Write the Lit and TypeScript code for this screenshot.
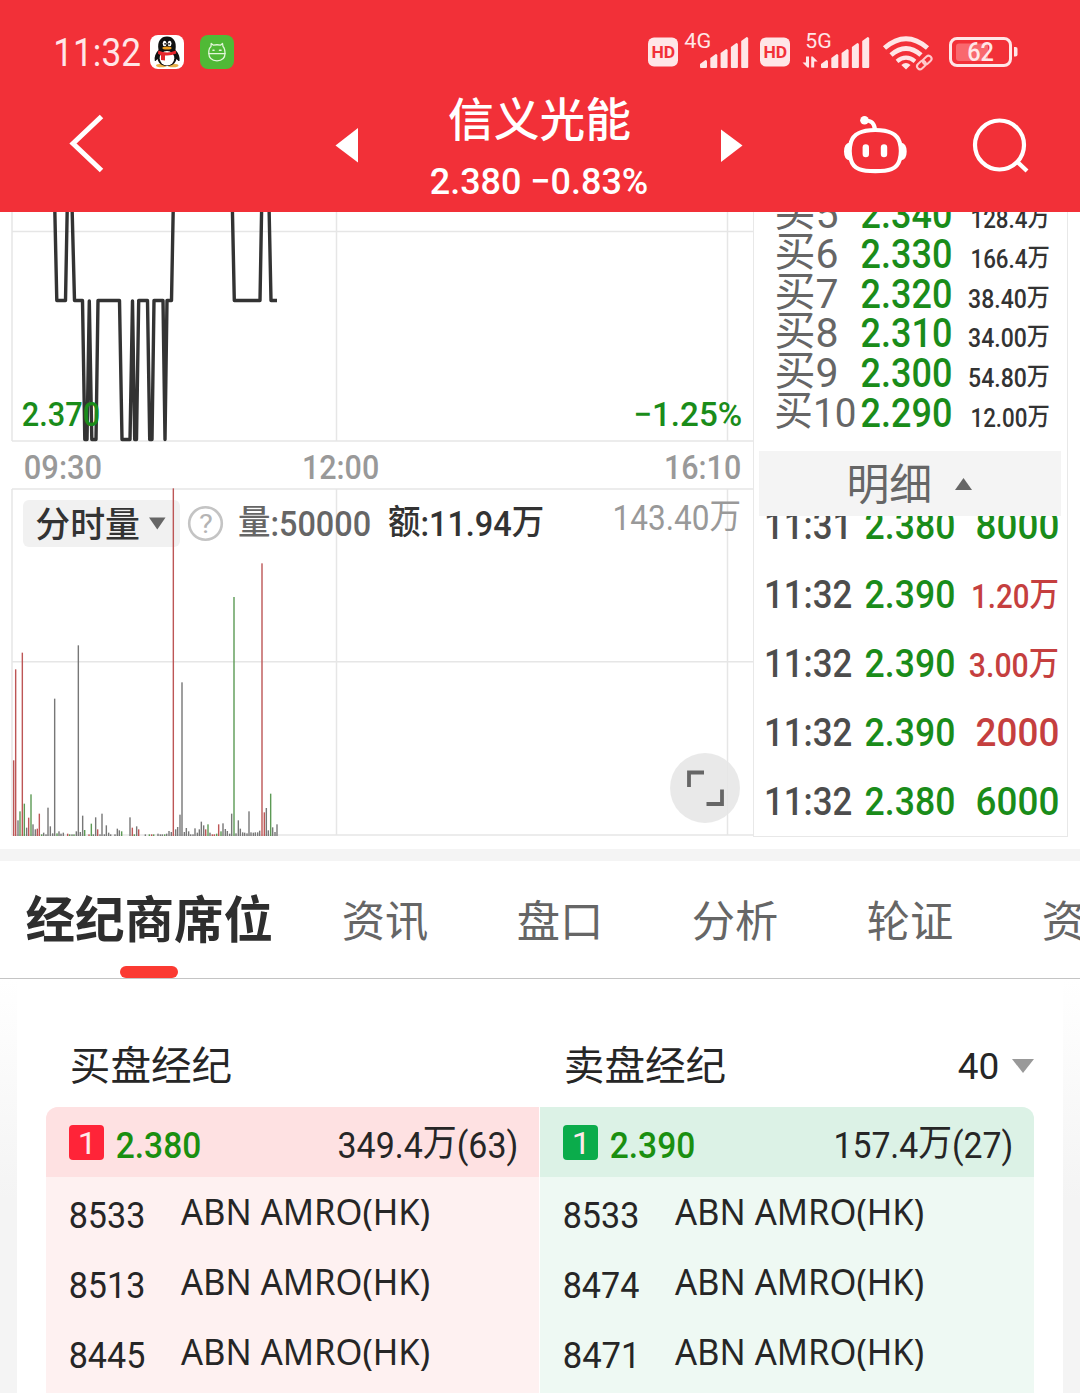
import { LitElement, html, svg, css } from "lit";
import { customElement } from "lit/decorators.js";

type Opt = { cls?: string; lb?: number; rb?: number };

/** Han characters set beside digits sit slightly above the digits' baseline. */
const runs = (text: string, size: number) => {
  const parts = text.split(/([\u4e00-\u9fff]+)/).filter((p) => p);
  if (parts.length < 2) return text;
  const lift = Math.round(size * 6) / 100;
  return parts.map((p, i) => {
    const han = /[\u4e00-\u9fff]/.test(p);
    const dy = han ? -lift : i ? lift : 0;
    return svg`<tspan dy=${dy}>${p}</tspan>`;
  });
};

/** SVG text whose ink spans x..x+w, with its baseline at y. */
const inkText = (text: string, x: number, y: number, w: number, size: number, o: Opt = {}) => {
  const lb = (o.lb ?? 0.035) * size;
  const rb = (o.rb ?? 0.035) * size;
  return svg`<text class=${o.cls ?? ""} x=${x - lb} y=${y} font-size=${size}
    textLength=${w + lb + rb} lengthAdjust="spacingAndGlyphs">${runs(text, size)}</text>`;
};

/** Inline label: its box is the ink width by the cap height, so it can be set in a flex row. */
const label = (text: string, w: number, size: number, o: Opt = {}) => {
  const h = Math.round(size * 0.715);
  return html`<svg class="label" width=${w} height=${h}>${inkText(text, 0, h, w, size, o)}</svg>`;
};

const BOOK = [
  ["买5", "2.340", "128.4万"],
  ["买6", "2.330", "166.4万"],
  ["买7", "2.320", "38.40万"],
  ["买8", "2.310", "34.00万"],
  ["买9", "2.300", "54.80万"],
  ["买10", "2.290", "12.00万"],
];

const TRADES = [
  ["11:31", "2.380", "8000", "down"],
  ["11:32", "2.390", "1.20万", "up"],
  ["11:32", "2.390", "3.00万", "up"],
  ["11:32", "2.390", "2000", "up"],
  ["11:32", "2.380", "6000", "down"],
];

const TABS = ["资讯", "盘口", "分析", "轮证", "资金"];

const BROKERS = [
  { side: "buy", price: "2.380", volume: "349.4万(63)", rows: ["8533", "8513", "8445"] },
  { side: "sell", price: "2.390", volume: "157.4万(27)", rows: ["8533", "8474", "8471"] },
];

/* minute volume: x and height in thirds of a pixel, then colour (r, g, or grey) */
const VOLUME =
  "41:227r 47:500r 54:47 60:74g 67:550r 73:97g 80:25 86:55r 93:125g 99:35 106:20 112:22r 118:67r 125:5g 131:10 138:5 144:85 151:29 158:8 164:412 171:8g 177:14 183:7 190:10 203:7r 209:5g 216:5 222:5g 229:14 235:572 241:12 248:61 254:18g 267:5r 274:37g 280:5 287:56 293:20r 300:5 306:67 313:5 319:32 326:10 332:5 345:5 352:22 358:17 365:14g 390:56 397:25r 403:5g 410:29 416:20r 436:5 448:5g 455:5r 461:5g 474:7 481:5 487:5 494:5g 500:7 507:15 514:12 520:1043r 527:20 533:27 540:64 546:461 553:12 559:24 566:14 572:5 579:5 585:23 592:10 598:20 604:43 611:32 617:20r 624:35g 630:10 637:5r 643:5r 650:7g 656:35r 663:14g 669:38 676:21 682:15 689:7 695:67 702:717g 708:8 715:47 721:22 728:11 734:10 741:8 747:74 753:11 760:10 766:11 773:11 779:16 786:818r 793:71r 799:84 805:17 812:127g 818:26 825:12 831:35"
    .split(" ")
    .map((s) => {
      const [, x, h, c] = /^(\d+):(\d+)([rg]?)$/.exec(s)!;
      return { x: +x / 3, h: +h / 3, cls: c === "r" ? "vr" : c === "g" ? "vg" : "vk" };
    });

const textCss = css`
  svg { display: block; flex: none; overflow: visible; }
  text {
    font-family: Roboto, "Noto Sans CJK SC", sans-serif;
    font-weight: 500;
    fill: currentColor;
    white-space: pre;
  }
  text.ui { font-family: "Noto Sans", "Noto Sans CJK SC", sans-serif; font-weight: 400; }
  text.reg { font-weight: 400; }
  text.bold { font-weight: 700; }
`;

@customElement("status-bar")
class StatusBar extends LitElement {
  static styles = [
    textCss,
    css`
      :host { display: flex; height: 44px; padding: 30px 62px 0 56px; color: #ffe6e7; }
      .time { padding-top: 8px; margin-right: 11px; }
      .app + .app { margin-left: 16px; }
      .right { display: flex; margin-left: auto; }
      .g6 { margin-left: 6px; }
      .g12 { margin-left: 12px; }
      .g14 { margin-left: 14px; }
      .g16 { margin-left: 16px; }
      .hd { fill: #f23038; }
    `,
  ];
  private hd() {
    return html`<svg width="30" height="44" viewBox="0 30 30 44">
      <rect x="0" y="37.500" width="30" height="29" rx="6" fill="#ffe6e7" />
      ${inkText("HD", 4.5, 58, 22, 17, { cls: "bold hd", lb: 0.06, rb: 0.04 })}
    </svg>`;
  }
  private bars(x: number) {
    return [0, 1, 2, 3, 4].map((i) => {
      const h = [8, 14, 19, 25, 31][i];
      return svg`<path d="M${x + i * 10.3} ${68 - h + 4} l5.500 -4 q1.500 0 1.500 1.500 V67 q0 1 -1 1 h-5 q-1 0 -1 -1z" fill="#ffe6e7" />`;
    });
  }
  render() {
    return html`
      <div class="time">${label("11:32", 83, 39, { cls: "reg", lb: 0.07, rb: 0.05 })}</div>
      <svg class="app" width="34" height="44" viewBox="150 30 34 44">
        <rect x="150" y="35" width="34" height="34" rx="8" fill="#fff" />
        <ellipse cx="161.500" cy="65.500" rx="5.500" ry="1.800" fill="#e9b04a" />
        <ellipse cx="173" cy="65.500" rx="5.500" ry="1.800" fill="#e9b04a" />
        <path d="M158.500 50C157 41 161 36.500 167 36.500S177 41 175.500 50C179 54 180 57 179.500 61C178.500 61.500 177.500 60 176.500 59C175.500 63.500 172 66 167 66S158.500 63.500 157.500 59C156.500 60 155.500 61.500 154.800 61C154 57 155.500 53 158.500 50Z" fill="#111" />
        <ellipse cx="167" cy="58.300" rx="7.300" ry="7.200" fill="#fff" />
        <ellipse cx="164.600" cy="43.500" rx="1.900" ry="2.700" fill="#fff" />
        <ellipse cx="169.600" cy="43.500" rx="1.900" ry="2.700" fill="#fff" />
        <circle cx="165.100" cy="43.800" r=".9" fill="#111" />
        <circle cx="169.100" cy="43.800" r=".9" fill="#111" />
        <ellipse cx="167" cy="48" rx="4.600" ry="1.500" fill="#f0a020" />
        <path d="M158.300 50.500Q167 54.500 175.800 50.500L176.300 53.500Q171 56 165 55.500V60.500L161 60V55Q159 54.500 158 53.800Z" fill="#e5252b" />
      </svg>
      <svg class="app" width="34" height="44" viewBox="200 30 34 44">
        <rect x="200" y="35" width="34" height="34" rx="8" fill="#50b936" />
        <g fill="none" stroke="#e2f6da" stroke-width="1.300" stroke-linecap="round" stroke-linejoin="round">
          <path d="M208.800 53.500V51Q209 48 211 46.500L211.200 43.500L213.500 45.200Q217 44.300 220.500 45.200L222.500 43.500L223 46.500Q225 48.500 225 53.500Q225 60.500 217 60.800Q209 60.500 208.800 53.500Z" />
          <path d="M209 53.600H225" />
          <path d="M213 50.300h1M219.500 50.300h1.500" stroke-width="1.600" />
        </g>
      </svg>
      <div class="right">
        ${this.hd()}
        <svg class="g6" width="64" height="44" viewBox="685 30 64 44">
          ${inkText("4G", 686, 48, 25.5, 20.5, { cls: "reg" })} ${this.bars(701)}
        </svg>
        <div class="g12">${this.hd()}</div>
        <svg class="g12" width="67" height="44" viewBox="803 30 67 44">
          ${inkText("5G", 807, 48, 25, 20.5, { cls: "reg" })}
          <path d="M807 56.500H810V67.500H808.500L803.500 62.500H807ZM812.200 67.500V56.500H813.700L818.700 61.500H815.200V67.500Z" fill="#ffe6e7" />
          ${this.bars(822)}
        </svg>
        <svg class="g14" width="50" height="44" viewBox="884 30 50 44">
          <g fill="none" stroke="#ffe6e7" stroke-width="4.800">
            <path d="M885.500 48Q907 29.500 928.500 48" />
            <path d="M892 55Q907 42 922 55" />
            <path d="M898 61.300Q907 54 916 61.300" stroke-width="4.200" />
          </g>
          <path d="M902.300 65Q907 60.800 911.500 65L907 69.500Z" fill="#ffe6e7" />
          <rect x="-4.800" y="-3" width="9.600" height="6" rx="3" transform="translate(927.500 59.500) rotate(-42)" fill="none" stroke="#f23038" stroke-width="5.500" />
          <g fill="none" stroke="#ffc9cc" stroke-width="2">
            <rect x="-4.800" y="-3" width="9.600" height="6" rx="3" transform="translate(928.200 60) rotate(-42)" />
            <rect x="-4.800" y="-3" width="9.600" height="6" rx="3" transform="translate(922.400 65) rotate(-42)" />
          </g>
        </svg>
        <svg class="g16" width="69" height="44" viewBox="949 30 69 44">
          <rect x="950.500" y="38.500" width="60" height="27" rx="6.500" fill="none" stroke="#ffe6e7" stroke-width="3" />
          <rect x="956" y="43.500" width="32" height="17.500" rx="3" fill="#f9686e" />
          <path d="M1014 47h1.500q2 0 2 2v5.500q0 2-2 2H1014z" fill="#ffe6e7" />
          ${inkText("62", 968, 61, 25, 25)}
        </svg>
      </div>
    `;
  }
}

@customElement("title-bar")
class TitleBar extends LitElement {
  static styles = [
    textCss,
    css`
      :host { display: flex; height: 138px; color: #fff; }
      .back { margin-left: 68px; }
      .prev { margin-left: 232px; }
      .name { width: 362px; display: flex; flex-direction: column; align-items: center; box-sizing: border-box; padding-top: 29px; gap: 32px; }
      .bot { margin-left: 99px; }
      .find { margin-left: 64px; }
      .stroke { fill: none; stroke: #fff; stroke-width: 4.200; }
      .chev { stroke-width: 5; }
    `,
  ];
  render() {
    return html`
      <svg class="back" width="36" height="138" viewBox="68 74 36 138">
        <path class="stroke chev" d="M101.500 116.500L73 143.500L101.500 170.500" />
      </svg>
      <svg class="prev" width="22" height="138" viewBox="336 74 22 138"><path d="M358 128V162.500L335.500 145.500Z" fill="#fff" /></svg>
      <div class="name">
        ${label("信义光能", 181, 46, { lb: 0.02, rb: 0.02 })} ${label("2.380 −0.83%", 216, 37)}
      </div>
      <svg width="23" height="138" viewBox="720 74 23 138"><path d="M721 129.500V162L742.500 145.500Z" fill="#fff" /></svg>
      <svg class="bot" width="66" height="138" viewBox="842 74 66 138">
        <path class="stroke" d="M875.300 130C862 130 853.500 133.500 851 142C849.300 148 849.300 154.500 851 160C853.500 169.500 862 171.200 875.300 171.200S897 169.500 899.600 160C901.300 154.500 901.300 148 899.600 142C897 133.500 888.500 130 875.300 130Z" />
        <path d="M849.500 142.500Q844 143.500 844 151.500T849.500 160.500ZM901 142.500Q906.700 143.500 906.700 151.500T901 160.500Z" fill="#fff" />
        <path class="stroke" d="M865 120.500C871 120.500 874.500 122.500 875 130" />
        <circle cx="864.500" cy="120.300" r="4.300" fill="#fff" />
        <rect x="862.600" y="144.300" width="6.400" height="13" rx="3.200" fill="#fff" />
        <rect x="880.800" y="144.300" width="6.400" height="13" rx="3.200" fill="#fff" />
      </svg>
      <svg class="find" width="58" height="138" viewBox="972 74 58 138">
        <circle class="stroke" cx="999.500" cy="145" r="24.500" />
        <path class="stroke" d="M1017 161.500L1027 171" />
      </svg>
    `;
  }
}

@customElement("minute-chart")
class MinuteChart extends LitElement {
  static styles = [
    textCss,
    css`
      :host { display: block; width: 753px; height: 637px; overflow: hidden; }
      svg { overflow: hidden; }
      .grid { stroke: #e6e6e6; stroke-width: 1.500; fill: none; }
      .line { stroke: #333; stroke-width: 3.400; fill: none; stroke-linejoin: round; }
      .green { fill: #1a8c1a; }
      .grey { fill: #999; }
      .pale { fill: #b4b4b4; }
      .mid { fill: #666; }
      .dark { fill: #333; }
      .vr { fill: #bd5656; }
      .vg { fill: #5c9a55; }
      .vk { fill: #777; }
    `,
  ];
  render() {
    return html`<svg width="753" height="637" viewBox="0 212 753 637">
      <path class="grid" d="M12 212V441M12 489V835.500M336.500 212V441M336.500 489V835.500M727.500 212V441M727.500 489V835.500M12 231.500H753M12 441H753M12 489H753M12 661.800H753M12 835H753" />
      <path class="line" d="M54.700 205L56.800 300.500H65.500L67.300 205M72 205L74.500 300.500H82.500L84.800 439.500H87L89.300 301L91.800 439.500H96L98 300.500H119.500L122 439.500H130L132.500 301L134.700 439.500H136.500L138.700 300.500H147.500L149.700 439.500H152L154 300.500H163L165 439.500L167 300.500H171.500L173.300 205M232.300 205L234.300 300.500H260L261.700 205M269 205L271 300.500H277" />
      ${inkText("2.370", 23, 425.5, 76, 34, { cls: "green" })}
      ${inkText("−1.25%", 635, 425.5, 106, 34, { cls: "green", lb: 0.05 })}
      ${inkText("09:30", 25, 478.7, 76, 34, { cls: "grey" })}
      ${inkText("12:00", 304, 478.7, 74, 34, { cls: "grey", lb: 0.06 })}
      ${inkText("16:10", 666, 478.7, 74, 34, { cls: "grey", lb: 0.06 })}
      <rect x="23" y="500" width="157" height="47" rx="6" fill="#f1f1f1" />
      ${VOLUME.map((v) => svg`<rect class=${v.cls} x=${v.x - 0.7} y=${836 - v.h} width="1.400" height=${v.h} />`)}
      ${inkText("分时量", 36, 536.5, 103, 35, { cls: "dark", lb: 0.02, rb: 0.03 })}
      <path d="M149 517.500H165.500L157.300 529.500Z" fill="#666" />
      <circle cx="205.500" cy="523.500" r="16.300" fill="none" stroke="#c4c4c4" stroke-width="2.600" />
      ${inkText("?", 200, 532.5, 12, 26, { cls: "reg pale" })}
      ${inkText("量:50000", 239, 536, 131, 34.5, { cls: "mid", lb: 0.03 })}
      ${inkText("额:11.94万", 389, 536, 154, 34.5, { cls: "dark", lb: 0.03 })}
      ${inkText("143.40万", 615, 530, 125, 34.5, { cls: "grey reg", lb: 0.07, rb: 0.03 })}
      <circle cx="705" cy="788" r="35" fill="#e6e6e6" fill-opacity=".88" />
      <path d="M689 787V772.500H704M722 789.500V804H706.500" fill="none" stroke="#666" stroke-width="3.800" />
    </svg>`;
  }
}

@customElement("quote-panel")
class QuotePanel extends LitElement {
  static styles = [
    textCss,
    css`
      :host {
        display: flex; flex-direction: column; box-sizing: border-box; width: 315px; height: 625px;
        border: 1px solid #e8e8e8; border-top: 0; background: #fff; color: #333;
      }
      .book, .trades { display: flex; flex-direction: column; justify-content: flex-end; overflow: hidden; box-sizing: border-box; }
      .book { height: 239px; padding-bottom: 24px; }
      .trades { height: 320px; padding-bottom: 21px; }
      .row { display: flex; flex: none; align-items: flex-end; }
      .book .row { height: 39.800px; padding: 0 18px 0 22px; }
      .trades .row { height: 69px; padding: 0 9px 0 12px; }
      .lvl { width: 86px; color: #666; }
      .tm { width: 100px; color: #4d4d4d; }
      .down { color: #1a8c1a; }
      .up { color: #c53f3f; }
      .end { margin-left: auto; }
      .more { display: flex; flex: none; align-items: center; justify-content: center; gap: 24px; height: 65px; margin: 0 6px 0 5px; background: #f4f4f4; color: #666; }
      .more .name { padding-top: 2px; }
    `,
  ];
  render() {
    return html`
      <div class="book">
        ${BOOK.map(
          ([l, p, v]) => html`<div class="row">
            <div class="lvl">${label(l, l.length > 2 ? 79 : 61, 41, { cls: "reg", lb: 0.04 })}</div>
            <div class="down">${label(p, 89, 41)}</div>
            <div class="end">${label(v, v[0] === "1" ? 77 : 80, 25.5, { lb: v[0] === "1" ? 0.06 : 0.035, rb: 0.03 })}</div>
          </div>`
        )}
      </div>
      <div class="more">
        <div class="name">${label("明细", 82, 43, { cls: "reg", lb: 0.06, rb: 0.03 })}</div>
        <svg width="17" height="12" viewBox="0 0 17 12"><path d="M0 12H17L8.500 0Z" fill="#666" /></svg>
      </div>
      <div class="trades">
        ${TRADES.map(
          ([t, p, v, d]) => html`<div class="row">
            <div class="tm">${label(t, 85, 39.5, { lb: 0.05 })}</div>
            <div class="down">${label(p, 88, 39.5)}</div>
            <div class="end ${d}">
              ${v.endsWith("万")
                ? label(v, v[0] === "1" ? 85 : 88, 32.5, { lb: v[0] === "1" ? 0.06 : 0.035, rb: 0.03 })
                : label(v, 81, 39.5)}
            </div>
          </div>`
        )}
      </div>
    `;
  }
}

@customElement("section-tabs")
class SectionTabs extends LitElement {
  static styles = [
    textCss,
    css`
      :host { display: flex; box-sizing: border-box; height: 130px; border-top: 12px solid #f4f4f4; border-bottom: 1px solid #c4c4c4; background: #fff; overflow: hidden; color: #666; }
      .on { display: flex; flex-direction: column; align-items: center; justify-content: space-between; width: 246px; flex: none; margin: 0 71px 0 26px; padding-top: 41px; box-sizing: border-box; color: #2e2e2e; }
      .bar { width: 58px; height: 12px; border-radius: 6px; background: #fb3a32; }
      .tab { width: 175px; flex: none; padding-top: 45px; }
    `,
  ];
  render() {
    return html`
      <div class="on">${label("经纪商席位", 246, 50, { cls: "bold", lb: 0.01, rb: 0.02 })}<div class="bar"></div></div>
      ${TABS.map((t) => html`<div class="tab">${label(t, 84, 43.5, { cls: "reg", lb: 0.03, rb: 0.03 })}</div>`)}
    `;
  }
}

@customElement("broker-queue")
class BrokerQueue extends LitElement {
  static styles = [
    textCss,
    css`
      :host { display: block; height: 414px; padding: 0 17px; overflow: hidden; box-sizing: border-box; background: linear-gradient(#fff, #f4f4f4 220px); color: #262626; }
      .card { height: 100%; box-sizing: border-box; padding: 0 29px; background: #fff; }
      .head { display: flex; align-items: flex-end; height: 101px; padding: 0 0 0 25px; margin-bottom: 27px; }
      .head .col { width: 494px; }
      .count { display: flex; align-items: center; gap: 14px; margin-left: auto; padding-bottom: 1px; }
      .head .sell { width: 160px; }
      .table { display: grid; grid-template-columns: 493px 494px; gap: 1px; border-radius: 12px 12px 0 0; overflow: hidden; height: 286px; }
      .side.buy { background: #fef1f1; }
      .side.sell { background: #eef9f3; }
      .top { display: flex; align-items: center; height: 70px; padding: 0 22px 0 23px; }
      .buy .top { background: #fee1e2; }
      .sell .top { background: #dcf2e6; }
      .badge { display: flex; align-items: center; justify-content: center; width: 35px; height: 35px; border-radius: 4px; color: #ffe9ea; margin-right: 13px; }
      .buy .badge { background: #ff2438; }
      .sell .badge { background: #0bac4b; }
      .price { color: #1a8f10; padding-top: 5px; }
      .vol { margin-left: auto; padding-top: 5px; }
      .row { display: flex; height: 70px; padding-left: 24px; }
      .id { width: 111px; padding-top: 24px; }
      .who { padding-top: 22px; }
    `,
  ];
  render() {
    return html`<div class="card">
      <div class="head">
        <div class="col">${label("买盘经纪", 160, 40, { cls: "reg", lb: 0.03, rb: 0.03 })}</div>
        <div class="sell">${label("卖盘经纪", 160, 40, { cls: "reg", lb: 0.03, rb: 0.03 })}</div>
        <div class="count">
          ${label("40", 39, 36.5, { cls: "reg" })}
          <svg width="22" height="14" viewBox="0 0 22 14"><path d="M0 0H22L11 14Z" fill="#999" /></svg>
        </div>
      </div>
      <div class="table">
        ${BROKERS.map(
          (b) => html`<div class="side ${b.side}">
            <div class="top">
              <div class="badge">${label("1", 10, 32, { cls: "reg", lb: 0.13, rb: 0.15 })}</div>
              <div class="price">${label(b.price, 83, 37)}</div>
              <div class="vol">${label(b.volume, b.side === "buy" ? 178 : 176, 37, { cls: "reg", lb: b.side === "buy" ? 0.04 : 0.07 })}</div>
            </div>
            ${b.rows.map(
              (r) => html`<div class="row">
                <div class="id">${label(r, r.endsWith("1") ? 72 : 74, 37.5, { cls: "reg", rb: r.endsWith("1") ? 0.12 : 0.035 })}</div>
                <div class="who">${label("ABN AMRO(HK)", 248, 36.5, { cls: "ui", lb: 0, rb: 0.03 })}</div>
              </div>`
            )}
          </div>`
        )}
      </div>
    </div>`;
  }
}

@customElement("app-root")
class AppRoot extends LitElement {
  static styles = css`
    :host { display: block; width: 1080px; height: 1393px; overflow: hidden; background: #fff; }
    header { display: block; height: 212px; background: #f23038; }
    .market { display: flex; height: 637px; }
  `;
  render() {
    return html`
      <header><status-bar></status-bar><title-bar></title-bar></header>
      <section class="market"><minute-chart></minute-chart><quote-panel></quote-panel></section>
      <section-tabs></section-tabs>
      <broker-queue></broker-queue>
    `;
  }
}
